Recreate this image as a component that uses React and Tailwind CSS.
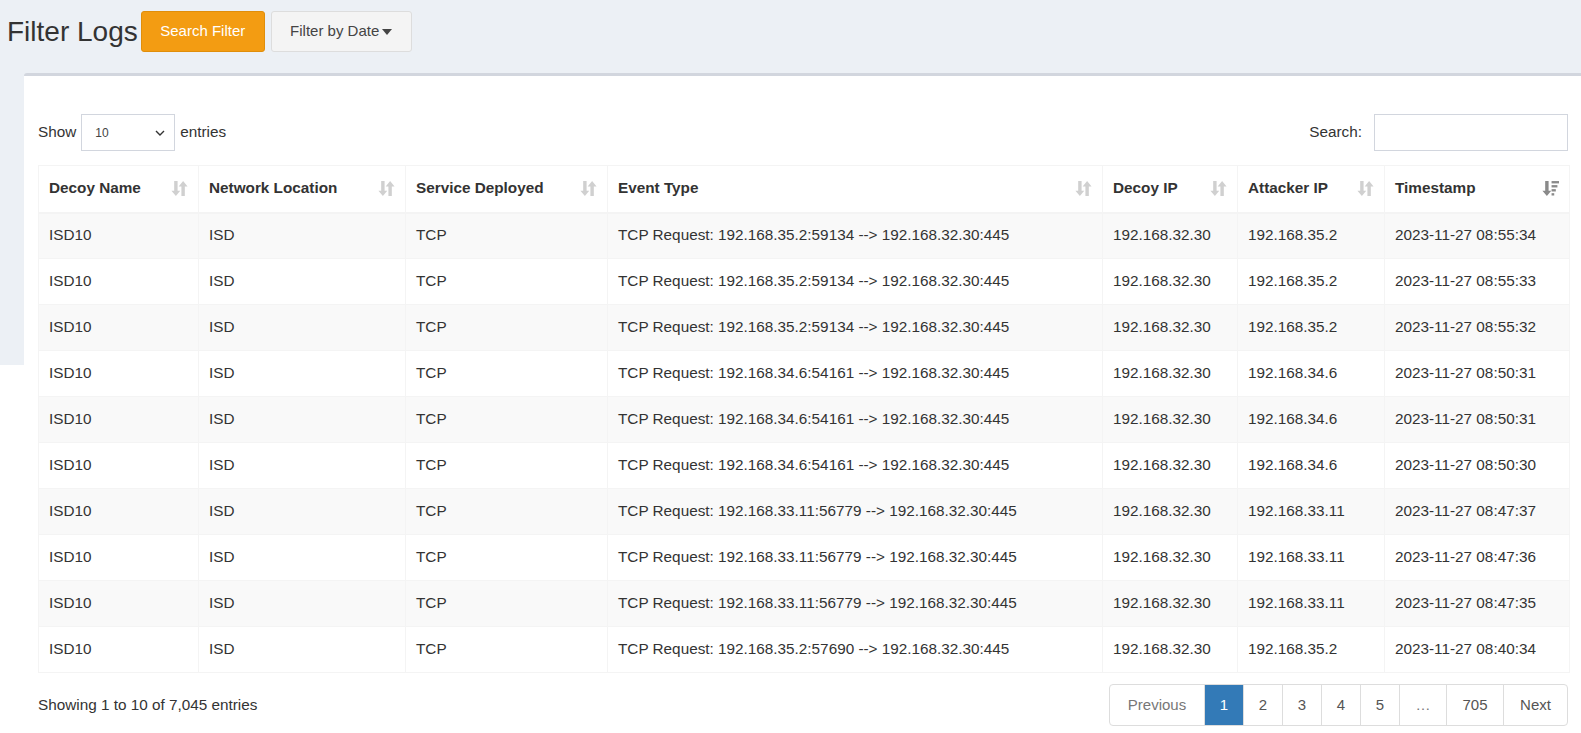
import React from "react";

const rows = [
  ["192.168.35.2:59134", "192.168.35.2", "2023-11-27 08:55:34"],
  ["192.168.35.2:59134", "192.168.35.2", "2023-11-27 08:55:33"],
  ["192.168.35.2:59134", "192.168.35.2", "2023-11-27 08:55:32"],
  ["192.168.34.6:54161", "192.168.34.6", "2023-11-27 08:50:31"],
  ["192.168.34.6:54161", "192.168.34.6", "2023-11-27 08:50:31"],
  ["192.168.34.6:54161", "192.168.34.6", "2023-11-27 08:50:30"],
  ["192.168.33.11:56779", "192.168.33.11", "2023-11-27 08:47:37"],
  ["192.168.33.11:56779", "192.168.33.11", "2023-11-27 08:47:36"],
  ["192.168.33.11:56779", "192.168.33.11", "2023-11-27 08:47:35"],
  ["192.168.35.2:57690", "192.168.35.2", "2023-11-27 08:40:34"],
];

const columns = [
  { label: "Decoy Name", w: "w-[160px]" },
  { label: "Network Location", w: "w-[207px]" },
  { label: "Service Deployed", w: "w-[202px]" },
  { label: "Event Type", w: "w-[495px]" },
  { label: "Decoy IP", w: "w-[135px]" },
  { label: "Attacker IP", w: "w-[147px]" },
  { label: "Timestamp", w: "w-[185px]", active: true },
];

function SortIcon() {
  return (
    <svg width="17" height="17" viewBox="0 0 16 16" className="text-[#d0d0d0]">
      <path d="M3 1h3.2v9h2.5L4.6 15 0.4 10H3z" fill="currentColor" />
      <path d="M9.8 15H13V6h2.6L11.4 1 7.2 6h2.6z" fill="currentColor" />
    </svg>
  );
}

function SortDescIcon() {
  return (
    <svg width="17" height="17" viewBox="0 0 16 16" className="text-[#8a8a8a]">
      <path d="M3 1h3.2v9h2.5L4.6 15 0.4 10H3z" fill="currentColor" />
      <rect x="9" y="1" width="7" height="2.2" fill="currentColor" />
      <rect x="9" y="4.8" width="5.5" height="2.2" fill="currentColor" />
      <rect x="9" y="8.6" width="4" height="2.2" fill="currentColor" />
      <rect x="9" y="12.4" width="2.5" height="2.2" fill="currentColor" />
    </svg>
  );
}

function PageButton({ children, active, muted, className = "" }) {
  return (
    <div
      className={
        "flex h-[42px] items-center justify-center border border-[#ddd] -ml-px text-[15px] " +
        (active
          ? "bg-[#337ab7] border-[#337ab7] text-white "
          : muted
          ? "bg-white text-[#777] "
          : "bg-white text-[#555] ") +
        className
      }
    >
      {children}
    </div>
  );
}

export default function App() {
  return (
    <div className="min-h-screen bg-white font-['Liberation_Sans',sans-serif] text-[#333] overflow-hidden">
      <div className="h-[365px] bg-[#ecf0f5]">
        {/* Header */}
        <div className="flex items-center pl-[7px] pt-[11px]">
          <h1 className="text-[28px] leading-none text-[#333] mr-[3px]">Filter Logs</h1>
          <button className="h-[41px] w-[124px] rounded-[3px] bg-[#f39c12] border border-[#e08e0b] text-white text-[15px]">
            Search Filter
          </button>
          <button className="ml-[6px] h-[41px] w-[141px] rounded-[3px] bg-[#f4f4f4] border border-[#ddd] text-[#444] text-[15px] flex items-center justify-center gap-[3px]">
            Filter by Date
            <svg width="10" height="6" viewBox="0 0 10 6">
              <path d="M0 0h10L5 6z" fill="#444" />
            </svg>
          </button>
        </div>

        {/* Card */}
        <div className="ml-[24px] mt-[21px] bg-white border-t-[3px] border-[#d2d6de] rounded-tl-[3px] pl-[14px] pr-[13px] pt-[38px] pb-[6px]">
          <div className="flex items-center justify-between">
            <div className="flex items-center gap-[5px] text-[15.3px]">
              <span>Show</span>
              <div className="relative flex h-[37px] w-[94px] items-center border border-[#d2d6de] pl-[13px] text-[12px] text-[#444]">
                10
                <svg className="absolute right-[9px] top-[15px]" width="10" height="7" viewBox="0 0 10 7">
                  <path d="M1 1l4 4 4-4" stroke="#333" strokeWidth="1.4" fill="none" />
                </svg>
              </div>
              <span>entries</span>
            </div>
            <div className="flex items-center gap-[12px] text-[15.3px]">
              <span>Search:</span>
              <div className="h-[37px] w-[194px] border border-[#d2d6de] bg-white" />
            </div>
          </div>

          <table className="mt-[14px] w-[1531px] table-fixed border-collapse border border-[#f4f4f4] text-[15.3px]">
            <thead>
              <tr className="h-[47px]">
                {columns.map((c) => (
                  <th
                    key={c.label}
                    className={c.w + " border border-[#f4f4f4] border-b-2 px-[10px] text-left font-bold text-[#333]"}
                  >
                    <div className="flex items-center justify-between">
                      <span>{c.label}</span>
                      {c.active ? <SortDescIcon /> : <SortIcon />}
                    </div>
                  </th>
                ))}
              </tr>
            </thead>
            <tbody>
              {rows.map((r, i) => (
                <tr key={i} className={"h-[46px] " + (i % 2 === 0 ? "bg-[#f9f9f9]" : "bg-white")}>
                  <td className="border border-[#f4f4f4] px-[10px]">ISD10</td>
                  <td className="border border-[#f4f4f4] px-[10px]">ISD</td>
                  <td className="border border-[#f4f4f4] px-[10px]">TCP</td>
                  <td className="border border-[#f4f4f4] px-[10px]">
                    TCP Request: {r[0]} --&gt; 192.168.32.30:445
                  </td>
                  <td className="border border-[#f4f4f4] px-[10px]">192.168.32.30</td>
                  <td className="border border-[#f4f4f4] px-[10px]">{r[1]}</td>
                  <td className="border border-[#f4f4f4] px-[10px]">{r[2]}</td>
                </tr>
              ))}
            </tbody>
          </table>

          <div className="mt-[11px] flex items-center justify-between">
            <span className="text-[15.3px]">Showing 1 to 10 of 7,045 entries</span>
            <div className="flex">
              <PageButton muted className="w-[96px] rounded-l-[4px] ml-0">Previous</PageButton>
              <PageButton active className="w-[40px]">1</PageButton>
              <PageButton className="w-[40px]">2</PageButton>
              <PageButton className="w-[40px]">3</PageButton>
              <PageButton className="w-[40px]">4</PageButton>
              <PageButton className="w-[40px]">5</PageButton>
              <PageButton muted className="w-[48px]">…</PageButton>
              <PageButton className="w-[58px]">705</PageButton>
              <PageButton className="w-[65px] rounded-r-[4px]">Next</PageButton>
            </div>
          </div>
        </div>
      </div>
    </div>
  );
}
